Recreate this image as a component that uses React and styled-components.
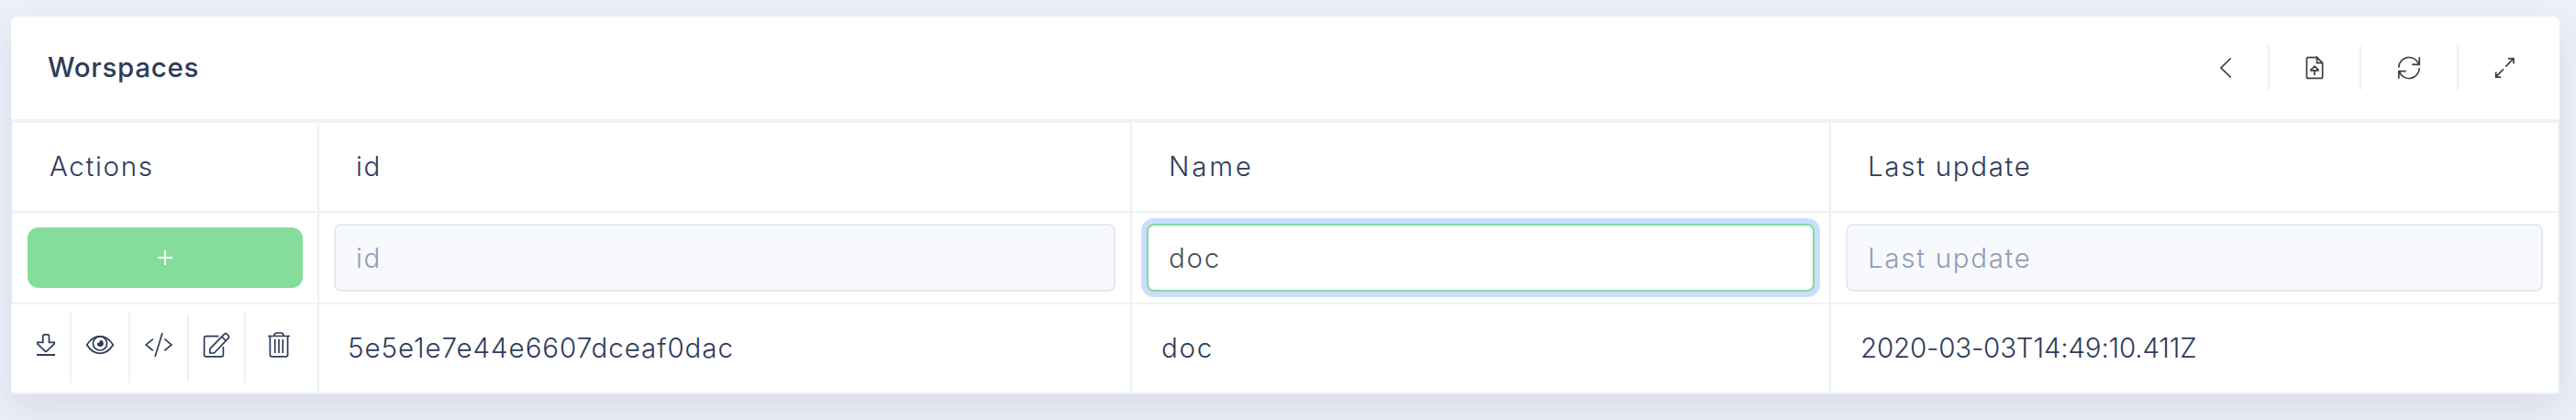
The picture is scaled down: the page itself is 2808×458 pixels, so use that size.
import React from "react";
import styled, { createGlobalStyle } from "styled-components";

const line = "#edf1f8";
const ink = "#2f3b5b";

const GlobalStyle = createGlobalStyle`
  * { box-sizing: border-box; }
  html { height: 100%; background: #ecf0f8; }
  body {
    margin: 0;
    height: 100%;
    overflow: hidden;
    color: ${ink};
    font: 300 29.5px/40px Inter, "Liberation Sans", sans-serif;
  }
`;

const Page = styled.main`
  height: 458px;
  padding: 18px 18px 28px 12px;
  overflow: hidden;
`;

const Card = styled.section`
  height: 412px;
  background: #fff;
  border-radius: 8px 8px 0 0;
  box-shadow: 0 16px 40px rgba(47, 59, 91, 0.11);
`;

const CardHeader = styled.header`
  display: flex;
  align-items: center;
  justify-content: space-between;
  height: 114px;
  padding: 0 10px 0 40px;
  border-bottom: 2px solid ${line};
`;

const Title = styled.h1`
  margin: 0;
  padding-bottom: 2px;
  font-size: 29.5px;
  font-weight: 500;
  line-height: 40px;
`;

const Label = styled.span`
  letter-spacing: ${(p) => p.$spacing || 0}px;
`;

const Toolbar = styled.div`
  display: flex;
  height: 48px;
  color: #3f3f42;
`;

const ToolButton = styled.button`
  display: flex;
  align-items: center;
  justify-content: center;
  width: ${(p) => p.$width}px;
  padding: 0;
  border: 0;
  border-right: ${(p) => (p.$last ? 0 : 2)}px solid ${line};
  background: none;
  color: inherit;
`;

const Table = styled.div`
  border-top: 2px solid ${line};
`;

const Row = styled.div`
  display: grid;
  grid-template-columns: 336px 886px 762px 794px;
  height: ${(p) => p.$height}px;
  border-bottom: 2px solid ${line};
`;

const Cell = styled.div`
  display: flex;
  align-items: center;
  padding: ${(p) => p.$pad};
  border-right: 2px solid ${line};
  &:first-child {
    border-left: ${(p) => (p.$open ? 0 : 2)}px solid ${line};
  }
`;

const AddButton = styled.button`
  display: flex;
  align-items: center;
  justify-content: center;
  width: 300px;
  height: 66px;
  border: 0;
  border-radius: 12px;
  background: #84de9a;
  color: #fff;
`;

const Field = styled.input`
  width: 100%;
  height: 74px;
  padding: 0 22px;
  border: 2px solid ${(p) => (p.$active ? "#84dc99" : "#e4e9f2")};
  border-radius: 8px;
  outline: 0;
  background: ${(p) => (p.$active ? "#fff" : "#f7f9fd")};
  box-shadow: ${(p) => (p.$active ? "0 0 0 6px #cadefc" : "none")};
  color: #4a5058;
  font: inherit;
  letter-spacing: ${(p) => p.$spacing || 0}px;
  &::placeholder { color: #929db5; opacity: 1; }
`;

const Action = styled.button`
  display: flex;
  align-items: center;
  justify-content: center;
  width: ${(p) => p.$width}px;
  height: ${(p) => p.$height || 78}px;
  padding: 0 0 6px;
  border: 0;
  border-right: ${(p) => (p.$last ? 0 : 2)}px solid ${line};
  background: none;
  color: inherit;
`;

const Glyph = styled.svg`
  display: block;
  width: 32px;
  height: 32px;
  flex: none;
  fill: none;
  stroke: currentColor;
  stroke-width: 1.7;
`;

const Icon = ({ children }) => (
  <Glyph viewBox="0 0 32 32" aria-hidden="true">{children}</Glyph>
);

const BackIcon = () => <Icon><path d="M21.7 5.5 11 16 21.7 26.3" /></Icon>;
const UploadIcon = () => (
  <Icon>
    <path d="M18.3 4.6H9.2Q7.5 4.6 7.5 6.3V25.7Q7.5 27.4 9.2 27.4H23Q24.7 27.4 24.7 25.7V10.7L18.6 4.6V10.7H24.7M16 24V18.7M16 14.3 12 18.2V18.8H20V18.2Z" />
  </Icon>
);
const RefreshIcon = () => (
  <Icon>
    <path d="M4.7 15.8A11.3 11.3 0 0 1 26.7 12.2M27.3 4.3V12.4H19.3M27.3 16.2A11.3 11.3 0 0 1 5.3 19.8M4.8 27.7V19.6H12.7" />
  </Icon>
);
const ExpandIcon = () => (
  <Icon>
    <path d="M17.3 14.7 25.8 6M20 5.8H26V11.5M15 17.3 6.5 25.8M6.7 20.5V26.2H12" />
  </Icon>
);
const PlusIcon = () => <Icon><path strokeWidth="2" d="M8 16H24M16 8V24" /></Icon>;
const DownloadIcon = () => (
  <Icon>
    <path d="M12.8 13.3V6.6Q12.8 4.9 14.5 4.9H17.8Q19.5 4.9 19.5 6.6V13.3H25.2V14.9L16.7 23Q16 23.6 15.3 23L6.8 14.9V13.3Z" />
    <path strokeWidth="2" d="M6 27H26" />
  </Icon>
);
const EyeIcon = () => (
  <Icon>
    <path d="M1.7 16C5 10.5 10 6.8 16 6.8S27 10.5 30.3 16C27 21.5 22 25.3 16 25.3S5 21.5 1.7 16Z" />
    <circle cx="16" cy="14.4" r="7.6" />
    <path fill="currentColor" stroke="none" d="M16 11.1A3.5 3.5 0 1 1 12.8 14.3Q15.8 14.3 16 11.1Z" />
  </Icon>
);
const CodeIcon = () => (
  <Icon>
    <path d="M9.8 9.7 2.2 15.9 9.8 22.3M20 3 12 29M22.3 9.7 29.9 15.9 22.3 22.3" />
  </Icon>
);
const EditIcon = () => (
  <Icon>
    <path d="M18.5 6.6H4.5Q2.6 6.6 2.6 8.5V27Q2.6 28.9 4.5 28.9H21.5Q23.4 28.9 23.4 27V18" />
    <path d="M8.8 25V20.4L24.5 4.3Q26 2.9 27.4 4.3L29 6Q30.2 7.3 29 8.6L13.5 25ZM21.7 7.2 26.2 11.5" />
  </Icon>
);
const TrashIcon = () => (
  <Icon>
    <path d="M4 6.5H28M11 6.3Q11 3 14 3H18Q21 3 21 6.3M6.4 7V27Q6.4 28.9 8.3 28.9H23.7Q25.6 28.9 25.6 27V7M11.7 10V25M16 10V25M20.3 10V25" />
  </Icon>
);

export default function App() {
  return (
    <Page>
      <GlobalStyle />
      <Card>
        <CardHeader>
          <Title><Label $spacing={0.7}>Worspaces</Label></Title>
          <Toolbar>
            <ToolButton $width={94}><BackIcon /></ToolButton>
            <ToolButton $width={100}><UploadIcon /></ToolButton>
            <ToolButton $width={106}><RefreshIcon /></ToolButton>
            <ToolButton $width={100} $last><ExpandIcon /></ToolButton>
          </Toolbar>
        </CardHeader>
        <Table>
          <Row $height={98}>
            <Cell $pad="0 40px 2px"><Label $spacing={1.65}>Actions</Label></Cell>
            <Cell $pad="0 40px 2px"><Label $spacing={1.6}>id</Label></Cell>
            <Cell $pad="0 40px 2px"><Label $spacing={2.8}>Name</Label></Cell>
            <Cell $pad="0 40px 2px"><Label $spacing={1.7}>Last update</Label></Cell>
          </Row>
          <Row $height={100}>
            <Cell $pad="0 16px"><AddButton><PlusIcon /></AddButton></Cell>
            <Cell $pad="0 16px"><Field placeholder="id" $spacing={1.6} /></Cell>
            <Cell $pad="0 16px"><Field defaultValue="doc" $active $spacing={1.7} /></Cell>
            <Cell $pad="0 16px"><Field placeholder="Last update" $spacing={1.7} /></Cell>
          </Row>
          <Row $height={98}>
            <Cell $pad="0 0 2px 12px" $open>
              <Action $width={54}><DownloadIcon /></Action>
              <Action $width={64}><EyeIcon /></Action>
              <Action $width={64} $height={72}><CodeIcon /></Action>
              <Action $width={62}><EditIcon /></Action>
              <Action $width={72} $last><TrashIcon /></Action>
            </Cell>
            <Cell $pad="0 31px 2px"><Label $spacing={0.95}>5e5e1e7e44e6607dceaf0dac</Label></Cell>
            <Cell $pad="0 32px 2px"><Label $spacing={1.7}>doc</Label></Cell>
            <Cell $pad="0 32px 2px"><Label $spacing={-0.17}>2020-03-03T14:49:10.411Z</Label></Cell>
          </Row>
        </Table>
      </Card>
    </Page>
  );
}
